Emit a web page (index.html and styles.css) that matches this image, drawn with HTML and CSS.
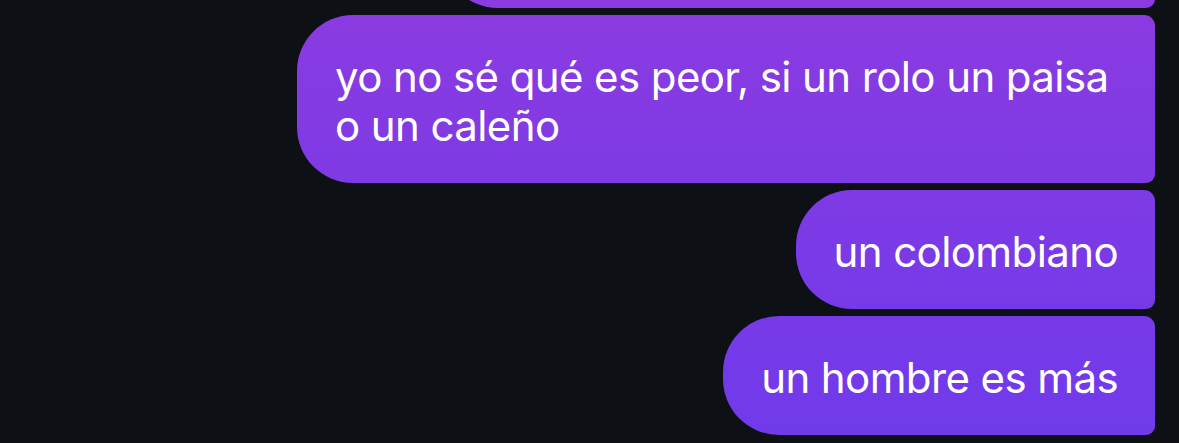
FILE: index.html
```html
<!DOCTYPE html>
<html lang="es">
<head>
    <meta charset="UTF-8">
    <meta name="viewport" content="width=device-width, initial-scale=1.0">
    <title>Mensajes</title>
    <link rel="stylesheet" href="styles.css">
</head>
<body>

    <div class="thread">
        <!-- previous message, scrolled mostly out of view -->
        <div class="bubble bubble-prev"></div>

        <div class="bubble">yo no sé qué es peor, si un rolo un paisa o un caleño</div>
        <div class="bubble">un colombiano</div>
        <div class="bubble">un hombre es más</div>
    </div>

</body>
</html>
```

FILE: styles.css
```css
body {
    margin: 0;
    padding: 0;
    background-color: #0d1014;
    font-family: 'Inter', 'Noto Sans', sans-serif;
    overflow: hidden;
}
.thread {
    display: flex;
    flex-direction: column;
    align-items: flex-end;
    gap: 7px;
    padding: 0 24px 0 0;
}
.bubble {
    box-sizing: border-box;
    max-width: 858px;
    padding: 37px 37px 33px 38px;
    font-size: 42px;
    line-height: 49px;
    letter-spacing: -0.6px;
    color: #fff;
    border-radius: 56px 11px 9px 56px;
    /* gradient follows the viewport, like the messages app */
    background: linear-gradient(180deg, #8b3be0 0%, #7c3ae6 50%, #703aeb 100%);
    background-attachment: fixed;
}
.bubble-prev {
    width: 713px;
    height: 119px;
    margin-top: -111px;
}
```
